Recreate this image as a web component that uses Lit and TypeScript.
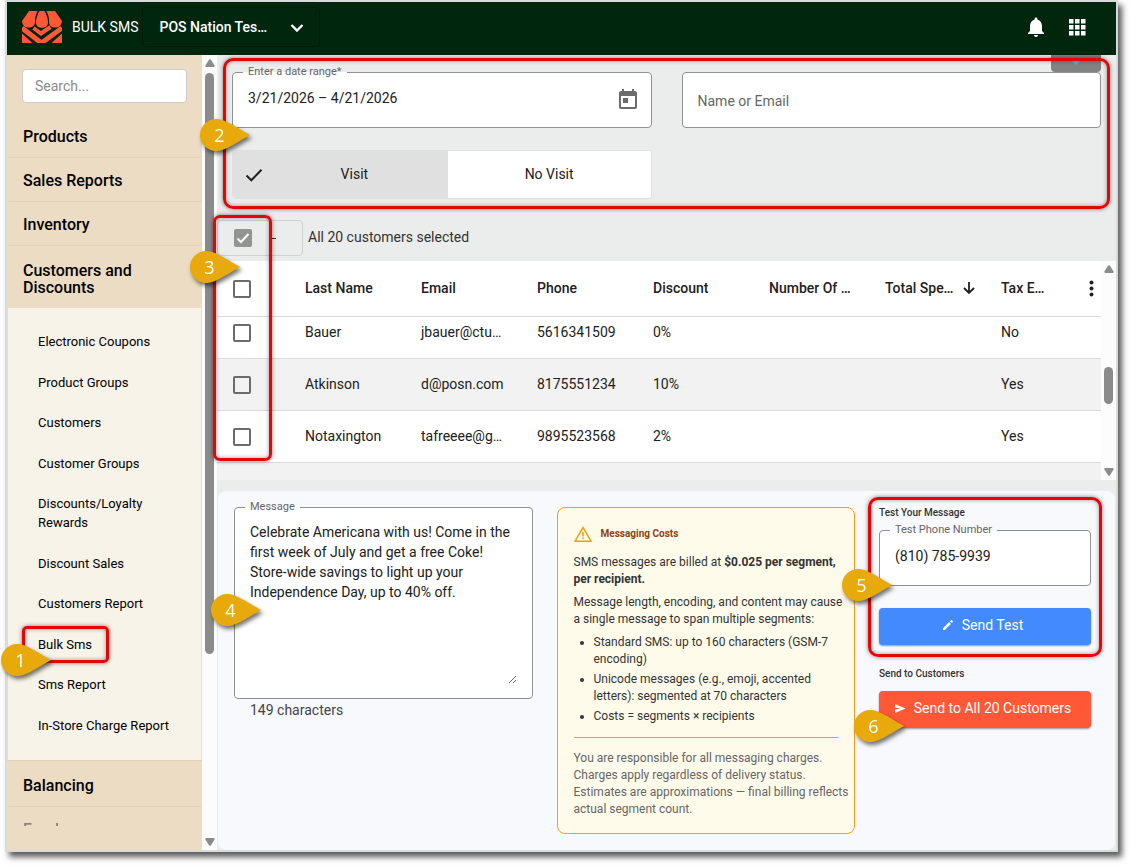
import { LitElement, html, css, svg } from "lit";
import { customElement, property, state } from "lit/decorators.js";
import { classMap } from "lit/directives/class-map.js";

interface Customer {
  last: string;
  email: string;
  phone: string;
  discount: string;
  orders: string;
  spend: string;
  exempt: string;
}

const CUSTOMERS: Customer[] = [
  { last: "Bauer", email: "jbauer@ctu…", phone: "5616341509", discount: "0%", orders: "", spend: "", exempt: "No" },
  { last: "Atkinson", email: "d@posn.com", phone: "8175551234", discount: "10%", orders: "", spend: "", exempt: "Yes" },
  { last: "Notaxington", email: "tafreeee@g…", phone: "9895523568", discount: "2%", orders: "", spend: "", exempt: "Yes" },
];

const SUBMENU = [
  "Electronic Coupons",
  "Product Groups",
  "Customers",
  "Customer Groups",
  "Discounts/Loyalty Rewards",
  "Discount Sales",
  "Customers Report",
  "Bulk Sms",
  "Sms Report",
  "In-Store Charge Report",
];

const MESSAGE =
  "Celebrate Americana with us! Come in the first week of July and get a free Coke! Store-wide savings to light up your Independence Day, up to 40% off.";

/* Numbered teardrop that points to the right. */
@customElement("step-marker")
export class StepMarker extends LitElement {
  @property() label = "";

  static styles = css`
    :host {
      position: absolute;
      z-index: 5;
      width: 50px;
      height: 32px;
      pointer-events: none;
      filter: drop-shadow(2px 3px 2px rgba(0, 0, 0, 0.55));
    }
    .drop {
      display: block;
      width: 50px;
      height: 32px;
    }
    .label {
      position: absolute;
      top: 0;
      left: 0;
      width: 39px;
      color: #fff;
      font: 18px/32px "Open Sans", sans-serif;
      text-align: center;
    }
  `;

  render() {
    return html`
      <svg class="drop" viewBox="0 0 50 32" aria-hidden="true">
        <path fill="#e8aa0b" d="M16 0C24 0 31 5 50 16C31 27 24 32 16 32A16 16 0 0 1 16 0Z" />
      </svg>
      <span class="label">${this.label}</span>
    `;
  }
}

/* Decorative scrollbar with two arrows and a thumb. */
@customElement("scroll-rail")
export class ScrollRail extends LitElement {
  static styles = css`
    :host {
      display: flex;
      flex-direction: column;
      align-items: center;
      box-sizing: border-box;
      width: 15px;
      padding: 4px 0;
      background: #fcfcfc;
    }
    .arrow {
      display: block;
      width: 10px;
      height: 8px;
      fill: #8b8b8b;
    }
    .track {
      flex: 1;
      display: flex;
      flex-direction: column;
      align-items: center;
      padding: 6px 0;
    }
    .before {
      flex: var(--before, 0);
    }
    .thumb {
      flex: var(--thumb, 1);
      width: 9px;
      border-radius: 5px;
      background: #8b8b8b;
    }
    .after {
      flex: var(--after, 0);
    }
  `;

  render() {
    return html`
      <svg class="arrow" viewBox="0 0 10 8" aria-hidden="true"><path d="M4.2 .6Q5 0 5.8 .6L9.6 6.6Q9.8 8 8.8 8H1.2Q.2 8 .4 6.6Z" /></svg>
      <div class="track">
        <div class="before"></div>
        <div class="thumb"></div>
        <div class="after"></div>
      </div>
      <svg class="arrow" viewBox="0 0 10 8" aria-hidden="true"><path d="M4.2 7.4Q5 8 5.8 7.4L9.6 1.4Q9.8 0 8.8 0H1.2Q.2 0 .4 1.4Z" /></svg>
    `;
  }
}

@customElement("app-root")
export class AppRoot extends LitElement {
  @state() private visit = true;

  static styles = css`
    :host {
      display: flex;
      flex-direction: column;
      box-sizing: border-box;
      min-height: 100vh;
      padding: 0 15px 15px 5px;
      background: #fff;
      color: #212121;
      font: 14px/20px Roboto, sans-serif;
    }
    *,
    *::before {
      box-sizing: border-box;
    }
    button,
    input,
    select,
    textarea {
      margin: 0;
      color: inherit;
      font: inherit;
    }
    .frame {
      flex: 1;
      display: flex;
      flex-direction: column;
      border: 2px solid #d9dbdb;
      background: #ebedec;
      box-shadow: 4px 5px 6px rgba(0, 0, 0, 0.65);
    }

    /* top bar */
    .topbar {
      display: flex;
      align-items: center;
      height: 53px;
      padding: 0 27px 3px 15px;
      background: #00260e;
      color: #fff;
    }
    .logo {
      width: 40px;
      height: 32px;
    }
    .app-name {
      margin-left: 10px;
    }
    .store {
      display: flex;
      align-items: center;
      width: 178px;
      height: 40px;
      margin-left: 4px;
      padding: 0 15px 0 16px;
      border: 1px solid #001a08;
      border-radius: 4px;
    }
    .store-select {
      flex: 1;
      min-width: 0;
      padding: 0;
      border: 0;
      background: none;
      appearance: none;
      font-weight: 500;
    }
    .chevron {
      width: 14px;
      height: 10px;
      pointer-events: none;
    }
    .actions {
      display: flex;
      gap: 17px;
      margin-left: auto;
    }
    .icon-button {
      display: flex;
      padding: 0;
      border: 0;
      background: none;
    }
    .icon-24 {
      display: block;
      width: 24px;
      height: 24px;
      fill: currentColor;
    }

    /* body */
    .body {
      flex: 1;
      display: flex;
    }
    .sidebar {
      flex: none;
      width: 195px;
      background: #ebdcc3;
      color: #000;
    }
    .search {
      display: block;
      width: 165px;
      height: 34px;
      margin: 14px 15px 11px;
      padding: 0 12px;
      border: 1px solid #ccc;
      border-radius: 4px;
      background: #fff;
    }
    .search::placeholder {
      color: #8a8a8a;
    }
    .group {
      display: block;
      width: 100%;
      padding: 14px 16px 12px;
      border: 0;
      border-bottom: 1px solid #e0d1b8;
      border-radius: 0 0 4px 4px;
      background: none;
      font-size: 16px;
      font-weight: 500;
      line-height: 17px;
      text-align: left;
    }
    .group.open {
      padding: 16px 48px 11px 16px;
      border-color: transparent;
    }
    .group.after {
      padding: 16px 16px 12px;
      border-top: 1px solid #e0d1b8;
    }
    .group.faded {
      height: 19px;
      overflow: hidden;
      border: 0;
      padding-bottom: 0;
      opacity: 0.4;
    }
    .submenu {
      display: flex;
      flex-direction: column;
      justify-content: space-between;
      min-height: 452px;
      margin: 0 1px;
      padding: 24px 30px 25px;
      background: #f7f3e8;
      font-size: 13px;
      line-height: 19px;
    }
    .submenu a {
      color: inherit;
      text-decoration: none;
    }
    .linked {
      position: relative;
    }
    .side-rail {
      flex: none;
      --thumb: 582;
      --after: 178;
    }
    .main {
      position: relative;
      flex: 1;
      min-width: 0;
      display: flex;
      flex-direction: column;
    }

    /* red outlines */
    .outline {
      position: absolute;
      z-index: 4;
      border: 3px solid #e80404;
      border-radius: 10px;
      box-shadow: 0 0 4px rgba(0, 0, 0, 0.5), inset 0 0 4px rgba(0, 0, 0, 0.4);
      pointer-events: none;
    }
    .outline-link {
      inset: -9px 62px -9px -16px;
      border-radius: 5px;
    }
    .outline-filters {
      inset: 3px 6px 11px 6px;
    }
    .outline-checks {
      top: -5px;
      left: -4px;
      width: 59px;
      height: 246px;
      border-radius: 7px;
    }
    .outline-test {
      inset: -10px -11px -12px;
    }
    .marker-1 {
      top: 9px;
      left: -37px;
    }
    .marker-2 {
      top: 64px;
      left: -17px;
    }
    .marker-3 {
      top: 31px;
      left: -27px;
    }
    .marker-4 {
      top: 95px;
      left: -23px;
    }
    .marker-5 {
      top: 62px;
      left: -37px;
    }
    .marker-6 {
      top: 19px;
      left: -25px;
    }

    /* outlined fields */
    .field {
      display: flex;
      min-width: 0;
      margin: 0;
      padding: 0 11px 0 10px;
      border: 1px solid #8f9190;
      border-radius: 4px;
      background: #fff;
    }
    .field legend {
      height: 16px;
      padding: 0 5px;
      color: #666;
      font-size: 11px;
      line-height: 16px;
    }
    .field input {
      flex: 1;
      min-width: 0;
      width: 100%;
      height: 36px;
      padding: 0 5px;
      border: 0;
      background: none;
    }

    /* filters */
    .filters {
      position: relative;
      display: grid;
      grid-template-columns: 1fr 1fr;
      align-items: end;
      gap: 22px 30px;
      padding: 9px 15px 21px;
    }
    .date-row {
      flex: 1;
      display: flex;
      height: 47px;
      align-items: flex-start;
      color: #666;
    }
    .date-row input {
      color: #212121;
    }
    .date-button {
      display: flex;
      margin-top: 8px;
      padding: 0;
      border: 0;
      background: none;
      color: #6b6b6b;
    }
    .name-input {
      width: 100%;
      height: 56px;
      padding: 2px 15px 0;
      border: 1px solid #8f9190;
      border-radius: 4px;
      background: #fff;
    }
    .name-input::placeholder {
      color: #666;
    }
    .pull-tab {
      position: absolute;
      top: 0;
      right: 15px;
      display: flex;
      justify-content: center;
      width: 50px;
      height: 17px;
      padding: 6px 0 0;
      border: 0;
      border-radius: 0 0 4px 4px;
      background: #828282;
    }
    .pull-arrow {
      width: 8px;
      height: 4px;
      fill: #4fb3d4;
    }
    .toggle {
      display: flex;
      height: 49px;
      border: 1px solid #e0e0e0;
      border-radius: 4px;
      background: #fff;
      overflow: hidden;
    }
    .toggle button {
      flex: 1;
      padding: 0 0 2px;
      border: 0;
      background: #fff;
    }
    .toggle button.on {
      display: flex;
      align-items: center;
      padding-left: 12px;
      background: #e0e0e0;
    }
    .tick {
      width: 18px;
      height: 14px;
      margin-top: 3px;
    }
    .on .toggle-text {
      flex: 1;
      padding-right: 2px;
    }

    /* selection bar */
    .selection {
      position: relative;
      display: flex;
      align-items: center;
      gap: 5px;
      height: 36px;
      margin-bottom: 5px;
      color: #333;
    }
    .selection-text {
      padding-bottom: 2px;
    }
    .select-all {
      display: flex;
      align-items: center;
      gap: 19px;
      width: 86px;
      height: 36px;
      padding: 0 16px;
      border: 1px solid #d0d2d1;
      border-radius: 4px;
    }
    .caret {
      width: 5px;
      height: 1px;
      background: #333;
    }
    .box {
      flex: none;
      display: block;
      width: 18px;
      height: 18px;
      border: 2px solid #6b6b6b;
      border-radius: 2px;
      appearance: none;
    }
    .box.checked {
      border: 0;
      background: #929492;
    }
    .check-wrap {
      display: grid;
    }
    .check-wrap > * {
      grid-area: 1 / 1;
    }
    .check-mark {
      width: 18px;
      height: 18px;
      pointer-events: none;
    }

    /* customers table */
    .grid-wrap {
      display: flex;
      height: 219px;
    }
    .grid-scroll {
      flex: 1;
      min-width: 0;
      overflow: hidden;
      background: #f2f2f2;
    }
    .grid {
      width: 100%;
      border-collapse: collapse;
      table-layout: fixed;
      background: #fff;
    }
    .grid th,
    .grid td {
      height: 52px;
      padding: 0 16px;
      border-bottom: 1px solid #dadada;
      overflow: hidden;
      text-align: left;
      white-space: nowrap;
    }
    .grid th {
      height: 55px;
      font-weight: 500;
    }
    .grid .pick {
      width: 72px;
    }
    .grid .box {
      margin-top: 2px;
    }
    .grid .cut td {
      height: 42px;
      padding-top: 5px;
      vertical-align: top;
    }
    .grid tr.alt td {
      background: #f2f2f2;
    }
    .head-cell {
      display: flex;
      align-items: center;
      justify-content: space-between;
    }
    .sort {
      flex: none;
      width: 12px;
      height: 14px;
      margin-right: -6px;
    }
    .more {
      display: flex;
      margin-right: -9px;
      padding: 0;
      border: 0;
      background: none;
    }
    .dots {
      width: 5px;
      height: 17px;
      fill: #222;
    }
    .grid-rail {
      flex: none;
      --before: 88;
      --thumb: 37;
      --after: 58;
    }

    /* composer */
    .composer {
      flex: 1;
      display: grid;
      grid-template-columns: 1fr 1fr 212px;
      align-items: start;
      gap: 24px;
      margin: 11px 1px 0;
      padding: 16px 24px 16px 16px;
      border-radius: 8px;
      background: #f8f9fc;
    }
    .message {
      position: relative;
      margin-top: -8px;
    }
    .message .field {
      padding-right: 15px;
      padding-bottom: 14px;
    }
    .message textarea {
      display: block;
      width: 100%;
      height: 169px;
      padding: 7px 0 0 5px;
      border: 0;
      outline: 0;
      background: none;
      resize: vertical;
    }
    .count {
      margin: 1px 16px 0;
      color: #444;
    }
    .costs {
      padding: 17px 6px 15px 16px;
      border: 1px solid #f3a11c;
      border-radius: 8px;
      background: #fffbeb;
      color: #333;
      font-size: 12px;
      line-height: 17px;
    }
    .costs-title {
      display: flex;
      align-items: center;
      gap: 9px;
      margin: 0 0 12px;
      color: #92400e;
      font-size: 10px;
      font-weight: 700;
      line-height: 17px;
    }
    .warn {
      width: 18px;
      height: 16px;
    }
    .costs p {
      margin: 0 0 6px;
    }
    .costs ul {
      margin: 0;
      padding: 0 0 0 20px;
    }
    .costs li {
      margin-top: 3px;
    }
    .costs hr {
      height: 1px;
      margin: 12px 10px 12px 0;
      border: 0;
      background: #f3a11c;
    }
    .costs .fine {
      margin: 0 -4px 0 0;
      color: #666;
    }
    .test {
      position: relative;
    }
    .caption {
      display: block;
      margin: 0;
      color: #333;
      font-size: 10px;
      font-weight: 500;
      line-height: 12px;
    }
    .test .field {
      margin: 3px 0 22px;
      height: 64px;
    }
    .action {
      display: flex;
      align-items: center;
      justify-content: center;
      gap: 8px;
      width: 100%;
      height: 37px;
      padding: 0 5px 3px 0;
      border: 0;
      border-radius: 4px;
      background: #448aff;
      box-shadow: 0 1px 2px rgba(0, 0, 0, 0.4);
      color: #fff;
    }
    .action.send {
      background: #ff5837;
    }
    .action-icon {
      width: 12px;
      height: 12px;
      fill: #fff;
    }
    .broadcast {
      margin-top: 23px;
    }
    .broadcast-action {
      position: relative;
      margin-top: 11px;
    }
  `;

  private logo() {
    return html`
      <svg class="logo" viewBox="0 0 40 32" aria-label="POS Nation" role="img">
        <g fill="#ff5837">
          <path d="M7 0H15.500Q12.500 6 13 11.500C12.500 15 10 16.600 6.600 16.600C3 16.600 .4 14.500 0 10Z" />
          <path d="M17.500 0H22.500Q26 6 26 11.500C26 15 23.500 16.800 20 16.800C16.500 16.800 14 15 14 11.500Q14 6 17.500 0Z" />
          <path d="M33 0H24.500Q27.500 6 27 11.500C27.500 15 30 16.600 33.400 16.600C37 16.600 39.600 14.500 40 10Z" />
          <path d="M0 22.500L10.500 32H0Z" />
          <path d="M40 22.500L29.500 32H40Z" />
        </g>
        <g fill="none" stroke="#ff5837">
          <path d="M0 17L19.500 32L40 17" stroke-width="5" />
          <path d="M11.500 17L19 22.500L28.500 16" stroke-width="4" />
        </g>
      </svg>
    `;
  }

  private checkbox(label: string) {
    return html`<input class="box" type="checkbox" aria-label=${label} />`;
  }

  private topbar() {
    return html`
      <header class="topbar">
        ${this.logo()}
        <span class="app-name">BULK SMS</span>
        <label class="store">
          <select class="store-select" aria-label="Store">
            <option>POS Nation Tes…</option>
          </select>
          <svg class="chevron" viewBox="0 0 14 10" aria-hidden="true">
            <path d="M1.500 3L7 8.500L12.500 3" fill="none" stroke="#fff" stroke-width="2.400" />
          </svg>
        </label>
        <div class="actions">
          <button class="icon-button" aria-label="Notifications">
            <svg class="icon-24" viewBox="0 0 24 24">
              <path d="M12 22c1.100 0 2-.9 2-2h-4c0 1.100.9 2 2 2zm6-6v-5c0-3.070-1.630-5.640-4.500-6.320V4c0-.83-.67-1.500-1.500-1.500s-1.500.67-1.500 1.500v.68C7.640 5.360 6 7.920 6 11v5l-2 2v1h16v-1l-2-2z" />
            </svg>
          </button>
          <button class="icon-button" aria-label="Apps">
            <svg class="icon-24" viewBox="0 0 24 24">
              ${[4, 10, 16].map((y) => [4, 10, 16].map((x) => svg`<rect x=${x} y=${y} width="4.500" height="4.500" />`))}
            </svg>
          </button>
        </div>
      </header>
    `;
  }

  private sidebar() {
    return html`
      <nav class="sidebar">
        <input class="search" type="search" placeholder="Search..." aria-label="Search" />
        <button class="group">Products</button>
        <button class="group">Sales Reports</button>
        <button class="group">Inventory</button>
        <button class="group open" aria-expanded="true">Customers and Discounts</button>
        <div class="submenu">
          ${SUBMENU.map((item) =>
            item === "Bulk Sms"
              ? html`<div class="linked">
                  <a href="#bulk-sms">${item}</a>
                  <div class="outline outline-link"></div>
                  <step-marker class="marker-1" label="1"></step-marker>
                </div>`
              : html`<a href="#">${item}</a>`
          )}
        </div>
        <button class="group after">Balancing</button>
        <button class="group faded">Employees</button>
      </nav>
      <scroll-rail class="side-rail"></scroll-rail>
    `;
  }

  private filters() {
    return html`
      <section class="filters">
        <button class="pull-tab" aria-label="Toggle filters">
          <svg class="pull-arrow" viewBox="0 0 8 4"><path d="M0 0H8L4 4Z" /></svg>
        </button>
        <fieldset class="field">
          <legend><label for="range">Enter a date range*</label></legend>
          <div class="date-row">
            <input id="range" value="3/21/2026 – 4/21/2026" />
            <button class="date-button" aria-label="Open calendar">
              <svg class="icon-24" viewBox="0 0 24 24">
                <path d="M19 3h-1V1h-2v2H8V1H6v2H5c-1.110 0-1.990.9-1.990 2L3 19c0 1.100.89 2 2 2h14c1.100 0 2-.9 2-2V5c0-1.100-.9-2-2-2zm0 16H5V8h14v11zM7 10h5v5H7z" />
              </svg>
            </button>
          </div>
        </fieldset>
        <input class="name-input" placeholder="Name or Email" aria-label="Name or Email" />
        <div class="toggle">
          <button class=${classMap({ on: this.visit })} aria-pressed="true">
            <svg class="tick" viewBox="0 0 18 14" aria-hidden="true">
              <path d="M1.500 7.500L6.300 12.300L16.500 1.800" fill="none" stroke="#212121" stroke-width="2" />
            </svg>
            <span class="toggle-text">Visit</span>
          </button>
          <button aria-pressed="false">No Visit</button>
        </div>
        <div class="outline outline-filters"></div>
        <step-marker class="marker-2" label="2"></step-marker>
      </section>
    `;
  }

  private selection() {
    return html`
      <section class="selection">
        <div class="select-all">
          <div class="check-wrap">
            <input class="box checked" type="checkbox" checked aria-label="Select all customers" />
            <svg class="check-mark" viewBox="0 0 18 18" aria-hidden="true">
              <path d="M3.500 9.500L7 13L14.500 5" fill="none" stroke="#fff" stroke-width="2" />
            </svg>
          </div>
          <span class="caret"></span>
        </div>
        <span class="selection-text">All 20 customers selected</span>
        <div class="outline outline-checks"></div>
        <step-marker class="marker-3" label="3"></step-marker>
      </section>
    `;
  }

  private table() {
    return html`
      <div class="grid-wrap">
        <div class="grid-scroll">
          <table class="grid">
            <thead>
              <tr>
                <th class="pick">${this.checkbox("Select page")}</th>
                <th>Last Name</th>
                <th>Email</th>
                <th>Phone</th>
                <th>Discount</th>
                <th>Number Of …</th>
                <th>
                  <div class="head-cell">
                    Total Spe…
                    <svg class="sort" viewBox="0 0 12 14" aria-hidden="true">
                      <path d="M6 1V12M1 7L6 12L11 7" fill="none" stroke="#212121" stroke-width="1.800" />
                    </svg>
                  </div>
                </th>
                <th>
                  <div class="head-cell">
                    Tax E…
                    <button class="more" aria-label="Column options">
                      <svg class="dots" viewBox="0 0 5 17">
                        <circle cx="2.500" cy="2.500" r="2" /><circle cx="2.500" cy="8.500" r="2" /><circle cx="2.500" cy="14.500" r="2" />
                      </svg>
                    </button>
                  </div>
                </th>
              </tr>
            </thead>
            <tbody>
              ${CUSTOMERS.map(
                (c, i) => html`
                  <tr class=${classMap({ cut: i === 0, alt: i % 2 === 1 })}>
                    <td>${this.checkbox("Select " + c.last)}</td>
                    <td>${c.last}</td>
                    <td>${c.email}</td>
                    <td>${c.phone}</td>
                    <td>${c.discount}</td>
                    <td>${c.orders}</td>
                    <td>${c.spend}</td>
                    <td>${c.exempt}</td>
                  </tr>
                `
              )}
            </tbody>
          </table>
        </div>
        <scroll-rail class="grid-rail"></scroll-rail>
      </div>
    `;
  }

  private composer() {
    return html`
      <section class="composer">
        <div class="message">
          <fieldset class="field">
            <legend><label for="message">Message</label></legend>
            <textarea id="message" .value=${MESSAGE}></textarea>
          </fieldset>
          <p class="count">149 characters</p>
          <step-marker class="marker-4" label="4"></step-marker>
        </div>

        <aside class="costs">
          <h3 class="costs-title">
            <svg class="warn" viewBox="0 0 18 16" aria-hidden="true">
              <path d="M9 1.500L17 15.200H1Z" fill="none" stroke="#f59e0b" stroke-width="1.500" />
              <path d="M9 6V10.500M9 11.500V13.200" stroke="#f59e0b" stroke-width="1.600" />
            </svg>
            Messaging Costs
          </h3>
          <p>SMS messages are billed at <strong>$0.025 per segment, per recipient.</strong></p>
          <p>Message length, encoding, and content may cause a single message to span multiple segments:</p>
          <ul>
            <li>Standard SMS: up to 160 characters (GSM-7 encoding)</li>
            <li>Unicode messages (e.g., emoji, accented letters): segmented at 70 characters</li>
            <li>Costs = segments × recipients</li>
          </ul>
          <hr />
          <p class="fine">
            You are responsible for all messaging charges. Charges apply regardless of delivery status. Estimates are
            approximations — final billing reflects actual segment count.
          </p>
        </aside>

        <div class="send-column">
          <div class="test">
            <h3 class="caption">Test Your Message</h3>
            <fieldset class="field">
              <legend><label for="phone">Test Phone Number</label></legend>
              <input id="phone" type="tel" value="(810) 785-9939" />
            </fieldset>
            <button class="action">
              <svg class="action-icon" viewBox="0 0 12 12" aria-hidden="true">
                <path d="M1 9.200V11H2.800L8.900 4.900L7.100 3.100ZM7.900 2.300L9.700 4.100L10.800 3Q11.200 2.600 10.800 2.200L9.800 1.200Q9.400 .8 9 1.200Z" />
              </svg>
              Send Test
            </button>
            <div class="outline outline-test"></div>
            <step-marker class="marker-5" label="5"></step-marker>
          </div>
          <div class="broadcast">
            <h3 class="caption">Send to Customers</h3>
            <div class="broadcast-action">
              <button class="action send">
                <svg class="action-icon" viewBox="0 0 12 12" aria-hidden="true">
                  <path d="M1 2L11.500 6.500L1 11V7.500L6.500 6.500L1 5.500Z" />
                </svg>
                Send to All 20 Customers
              </button>
              <step-marker class="marker-6" label="6"></step-marker>
            </div>
          </div>
        </div>
      </section>
    `;
  }

  render() {
    return html`
      <div class="frame">
        ${this.topbar()}
        <div class="body">
          ${this.sidebar()}
          <main class="main">${this.filters()} ${this.selection()} ${this.table()} ${this.composer()}</main>
        </div>
      </div>
    `;
  }
}
